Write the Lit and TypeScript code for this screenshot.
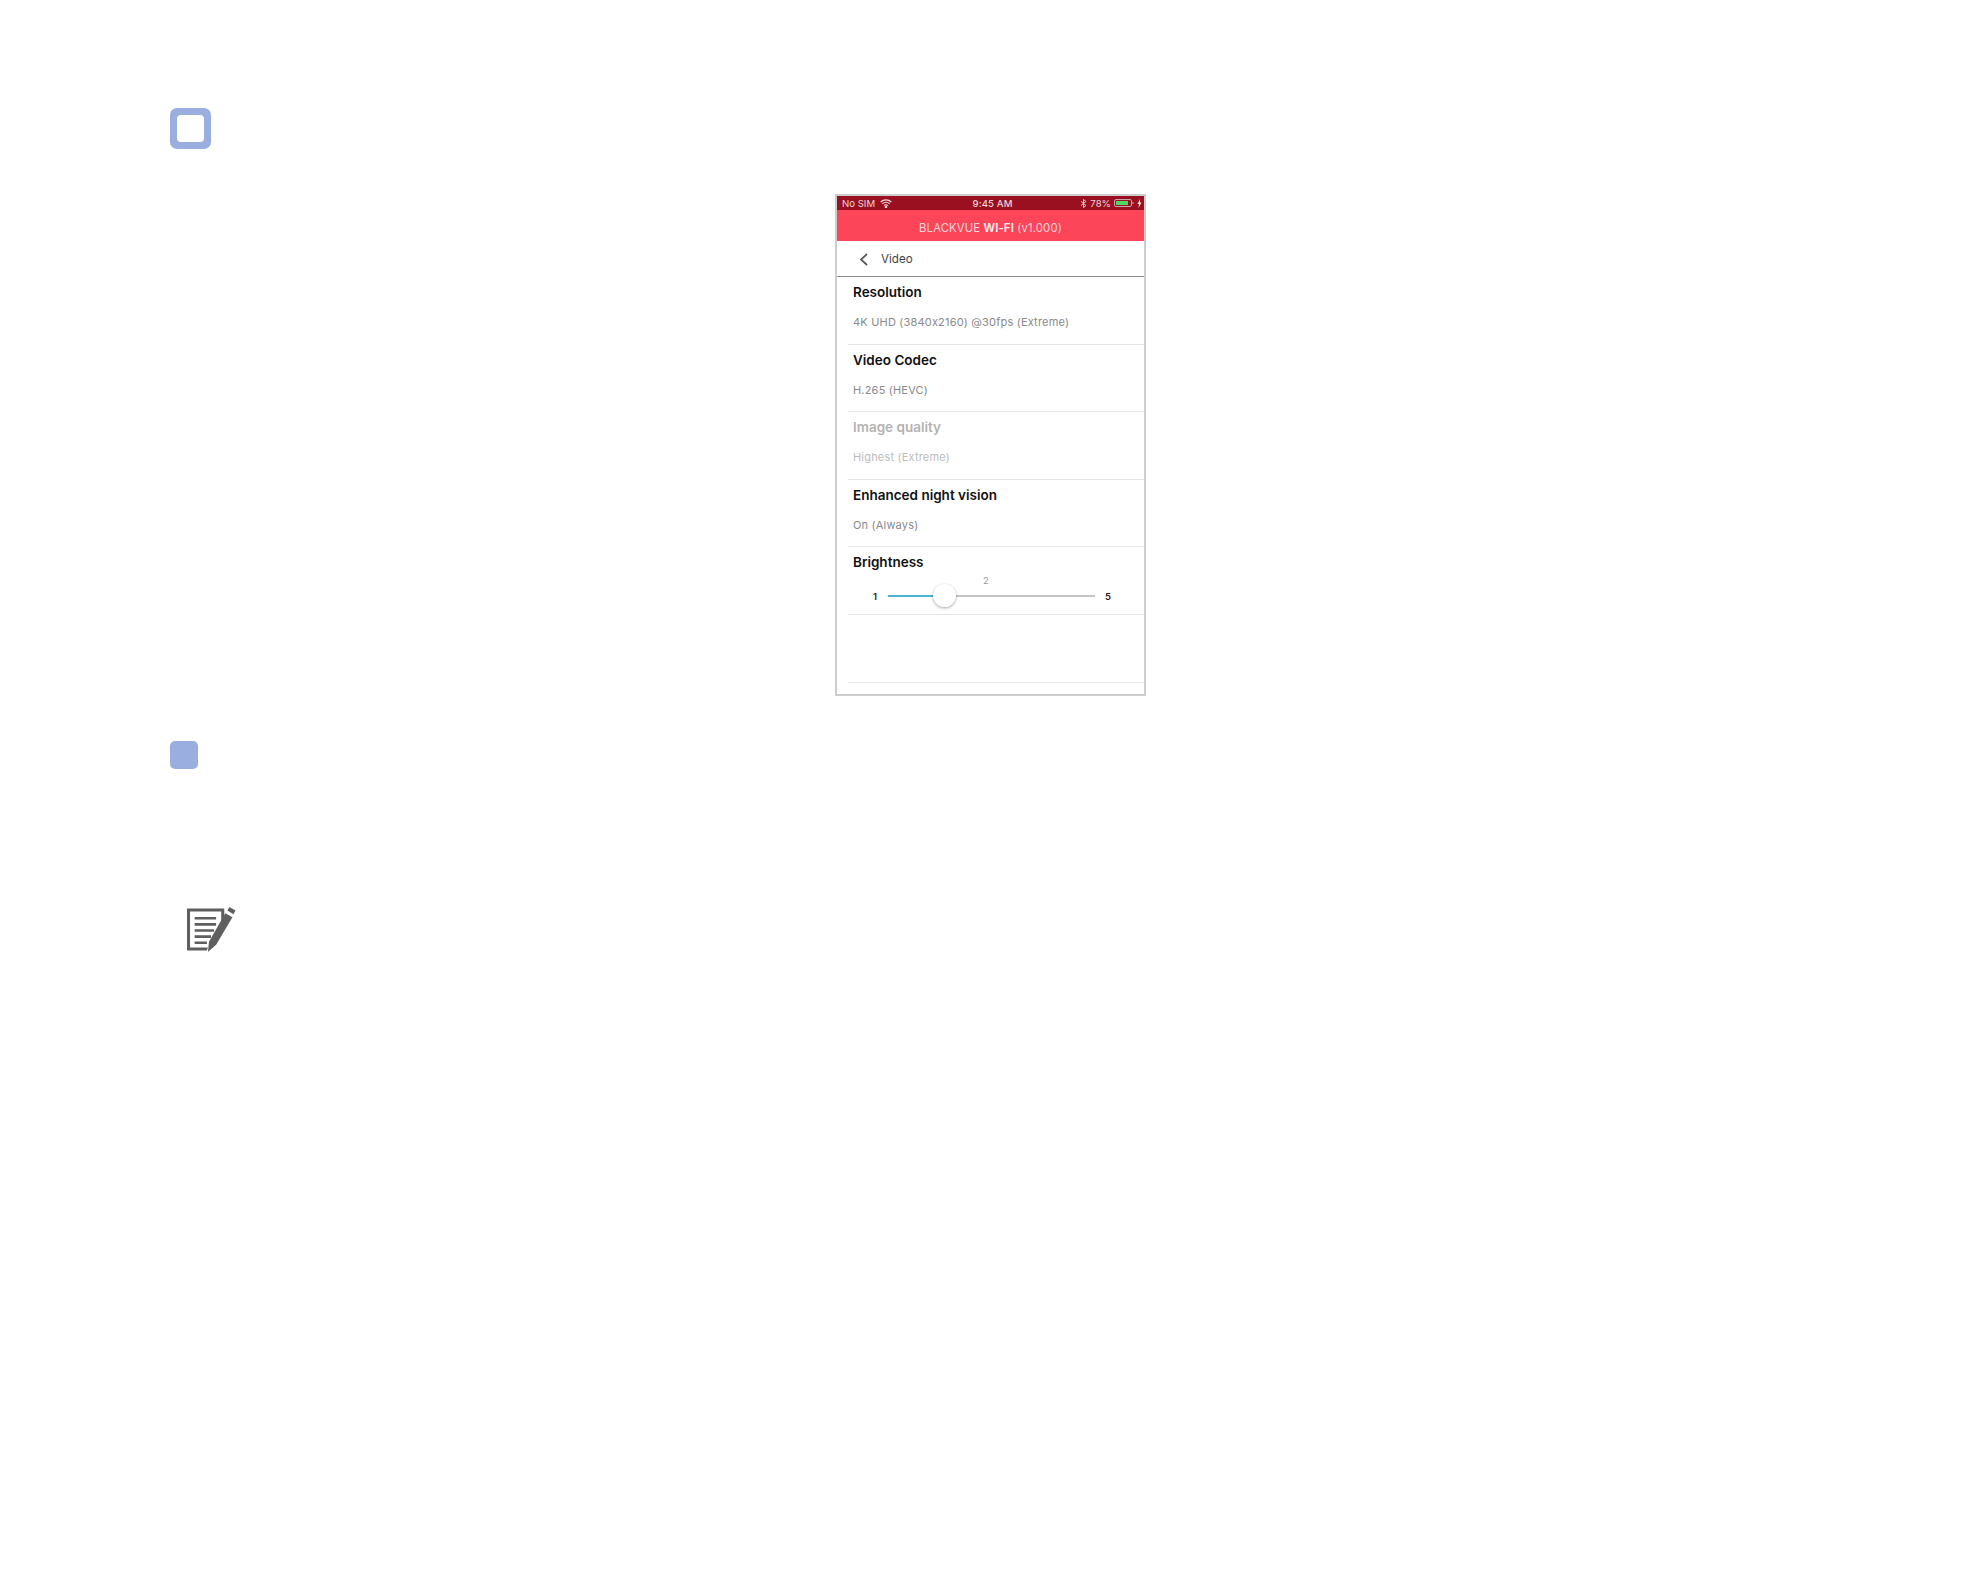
import { LitElement, html, css } from "lit";
import { customElement } from "lit/decorators.js";

@customElement("app-root")
export class AppRoot extends LitElement {
  static styles = css`
    :host { display: block; width: 1984px; height: 1587px; background: #fff; font-family: Inter, "Liberation Sans", sans-serif; overflow: hidden; }
    .page { display: flex; flex-direction: column; padding: 108px 0 0 170px; }
    .sq-out { width: 41px; height: 41px; box-sizing: border-box; padding: 7px; border-radius: 7px; background: #9aaee0; }
    .sq-in { height: 100%; border-radius: 4px; background: #fff; }
    .phone { margin: 45px 0 0 665px; width: 311px; height: 502px; box-sizing: border-box; border: 2px solid #cdcdcd; display: flex; flex-direction: column; background: #fff; }
    .status { height: 14px; background: #9b1021; color: #e9d5d8; font-size: 9.6px; display: grid; grid-template-columns: 1fr auto 1fr; align-items: center; padding: 0 2px 0 5px; }
    .st-l, .st-r { display: flex; align-items: center; gap: 5px; }
    .st-r { justify-content: flex-end; gap: 3px; }
    .time { font-weight: 500; margin-left: 1px; letter-spacing: 0.1px; }
    .head { height: 31px; box-sizing: border-box; padding-top: 4px; background: #fd4559; color: #fbd4d9; font-size: 11.3px; display: flex; align-items: center; justify-content: center; letter-spacing: 0.14px; }
    .head b { font-weight: 600; color: #fff0f1; }
    .nav { height: 36px; box-sizing: border-box; padding-top: 1px; border-bottom: 1px solid #8c8c8c; display: flex; align-items: center; padding-left: 22px; gap: 13px; font-size: 11.6px; color: #444; }
    .row { height: 67.6px; box-sizing: border-box; margin-left: 11px; border-bottom: 1px solid #e6e6e6; padding: 7px 0 0 5px; }
    .t { font-size: 13.5px; font-weight: 600; color: #111; line-height: 16px; }
    .v { font-size: 11px; color: #8a8a8a; margin-top: 15px; line-height: 15px; letter-spacing: 0.19px; }
    .dis .t { color: #b3b3b3; }
    .dis .v { color: #bcbcbc; }
    .slider { display: flex; align-items: center; margin: 15px 0 0 20px; font-size: 9.500px; font-weight: 600; color: #222; position: relative; height: 22px; }
    .num { position: absolute; left: 110px; top: -10px; font-weight: 400; color: #999; }
    .track { width: 207px; height: 2px; margin: 0 10px 0 11px; background: #c4c4c4; position: relative; }
    .fill { width: 48px; height: 2px; background: #4cb4cf; }
    .thumb { position: absolute; left: 45px; top: -11px; width: 23px; height: 23px; border-radius: 50%; background: #fff; box-shadow: 0 1px 3px rgba(0,0,0,.35); }
    .sq-fill { margin-top: 45px; width: 28px; height: 28px; border-radius: 5px; background: #9aaee0; }
    .note { display: block; margin: 137px 0 0 15px; }
  `;

  private row(t: string, v: string, dis = false) {
    return html`<div class="row ${dis ? "dis" : ""}"><div class="t">${t}</div><div class="v">${v}</div></div>`;
  }

  render() {
    return html`<div class="page">
      <div class="sq-out"><div class="sq-in"></div></div>
      <div class="phone">
        <div class="status">
          <div class="st-l"><span>No SIM</span>
            <svg width="12" height="9" viewBox="0 0 12 9" fill="none" stroke="#f1dfe1" stroke-width="1.2"><path d="M.7 3a7.6 7.6 0 0 1 10.6 0M2.400 4.800a5 5 0 0 1 7.200 0M4.200 6.500a2.500 2.500 0 0 1 3.600 0"/><circle cx="6" cy="8" r=".7" fill="#f1dfe1"/></svg>
          </div>
          <div class="time">9:45 AM</div>
          <div class="st-r">
            <svg width="7" height="9" viewBox="0 0 7 9" fill="none" stroke="#e9d5d8" stroke-width=".9"><path d="M1 2.500l5 4-2.500 2V.5L6 2.500l-5 4"/></svg>
            <span>78%</span>
            <svg width="20" height="8" viewBox="0 0 20 8"><rect x=".5" y=".5" width="17" height="7" rx="1.500" fill="none" stroke="#c9a4aa"/><rect x="2" y="2" width="12" height="4" fill="#4cd964"/><rect x="18.500" y="3" width="1" height="2" fill="#c9a4aa"/></svg>
            <svg width="5" height="9" viewBox="0 0 5 9"><path d="M3 0L.5 5H2L1.500 9 4.500 3.500H3z" fill="#f1dfe1"/></svg>
          </div>
        </div>
        <div class="head"><span>BLACKVUE <b>WI-FI</b> (v1.000)</span></div>
        <div class="nav">
          <svg width="9" height="13" viewBox="0 0 9 13" fill="none" stroke="#555" stroke-width="1.700"><path d="M8 1L2 6.500 8 12"/></svg>
          <span>Video</span>
        </div>
        ${this.row("Resolution", "4K UHD (3840x2160) @30fps (Extreme)")}
        ${this.row("Video Codec", "H.265 (HEVC)")}
        ${this.row("Image quality", "Highest (Extreme)", true)}
        ${this.row("Enhanced night vision", "On (Always)")}
        <div class="row">
          <div class="t">Brightness</div>
          <div class="slider">
            <span class="num">2</span>
            <span>1</span>
            <div class="track"><div class="fill"></div><div class="thumb"></div></div>
            <span>5</span>
          </div>
        </div>
        <div class="row"></div>
      </div>
      <div class="sq-fill"></div>
      <svg class="note" width="52" height="47" viewBox="0 0 50 46">
        <path d="M1.500 2.500H38V11L35 16V5.500H4.500V40.500H22L21 43.500H1.500z" fill="#5f5f5f"/>
        <path d="M9 12h21M9 18h21M9 24h19M9 30h16M9 36h12" stroke="#5f5f5f" stroke-width="2.600"/>
        <path d="M39 7l7 4-16 27-8 7 1-10z" fill="#5f5f5f"/>
        <path d="M43 1l6 3.500-2 3.500-6-3.500z" fill="#5f5f5f"/>
      </svg>
    </div>`;
  }
}
